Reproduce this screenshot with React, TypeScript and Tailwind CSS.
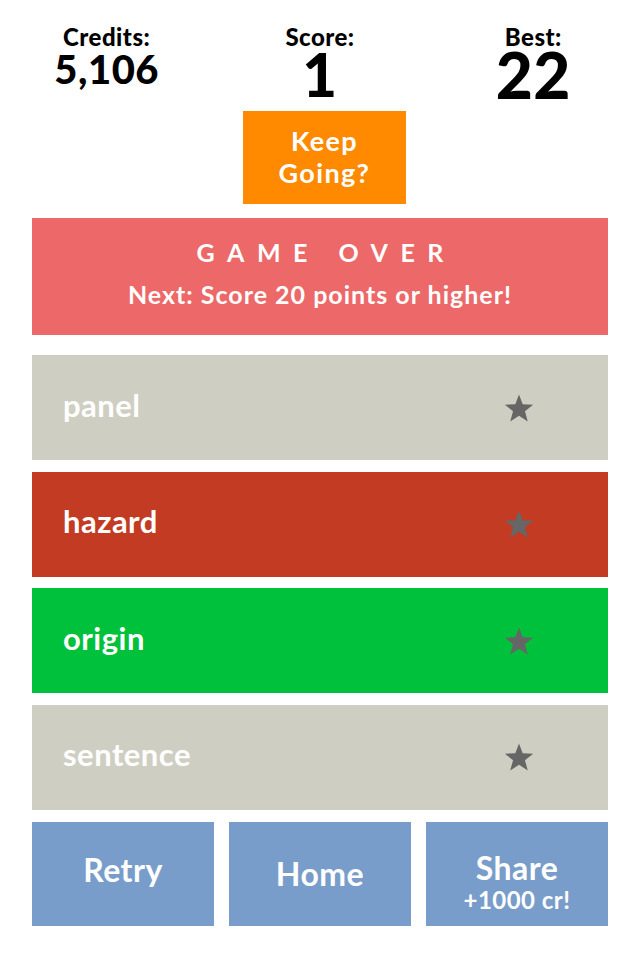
import React from 'react';

// ── Data ─────────────────────────────────────────────────────────────────────

const words = [
  { word: 'panel',    cls: 'bg-[#cfcec2]' },
  { word: 'hazard',   cls: 'bg-[#c23b22]' },
  { word: 'origin',   cls: 'bg-[#00c13b]' },
  { word: 'sentence', cls: 'bg-[#cfcec2]' },
];

function Star() {
  return (
    <svg className="w-[34px] h-[34px]" viewBox="0 0 24 24" fill="#666666">
      <path d="M12 2.5l2.6 6.9 7.4.3-5.8 4.6 2 7.2L12 17.4l-6.2 4.1 2-7.2L2 9.7l7.4-.3z" />
    </svg>
  );
}

export default function App() {
  return (
    <div className="w-[640px] h-[960px] bg-white text-black font-['Lato','Open_Sans',sans-serif] font-bold tracking-[0.03em]">

      {/* Header stats */}
      <div className="h-[111px] grid grid-cols-3 pt-[26px]">
        <div className="flex flex-col items-center">
          <span className="text-[24px] leading-[22px] font-black">Credits:</span>
          <span className="text-[40px] leading-[40px] font-black mt-[1px]">5,106</span>
        </div>
        <div className="flex flex-col items-center">
          <span className="text-[24px] leading-[22px] font-black">Score:</span>
          <span className="text-[60px] leading-[52px] font-black">1</span>
        </div>
        <div className="flex flex-col items-center">
          <span className="text-[24px] leading-[22px] font-black">Best:</span>
          <span className="text-[64px] leading-[54px] font-black">22</span>
        </div>
      </div>

      {/* Keep going */}
      <div className="flex justify-center pl-[9px]">
        <div className="w-[163px] h-[93px] bg-[#ff8a00] text-white flex flex-col items-center justify-center text-center text-[27px] leading-[32px] tracking-[0.05em] pb-[2px]">
          <span>Keep</span>
          <span>Going?</span>
        </div>
      </div>

      {/* Game over banner */}
      <div className="mx-[32px] mt-[14px] h-[117px] bg-[#ec6869] text-white flex flex-col items-center pt-[19px]">
        <span className="text-[25px] leading-[30px] tracking-[0.5em] pl-[0.5em]">GAME OVER</span>
        <span className="text-[25px] leading-[30px] mt-[12px] tracking-[0.04em]">Next: Score 20 points or higher!</span>
      </div>

      {/* Words */}
      <div className="mx-[32px] mt-[20px] flex flex-col gap-[11.5px]">
        {words.map(w => (
          <div key={w.word} className={`h-[105px] ${w.cls} flex items-center pl-[31px] pr-[72px]`}>
            <span className="flex-1 text-white text-[31px] leading-[38px] pb-[6px]">{w.word}</span>
            <Star />
          </div>
        ))}
      </div>

      {/* Bottom buttons */}
      <div className="mx-[32px] mt-[12px] grid grid-cols-3 gap-[15px] text-white">
        <div className="h-[104px] bg-[#789dca] flex items-center justify-center text-[32px] pb-[8px]">Retry</div>
        <div className="h-[104px] bg-[#789dca] flex items-center justify-center text-[32px]">Home</div>
        <div className="h-[104px] bg-[#789dca] flex flex-col items-center justify-center pt-[18px]">
          <span className="text-[32px] leading-[34px]">Share</span>
          <span className="text-[24px] leading-[29px]">+1000 cr!</span>
        </div>
      </div>
    </div>
  );
}
